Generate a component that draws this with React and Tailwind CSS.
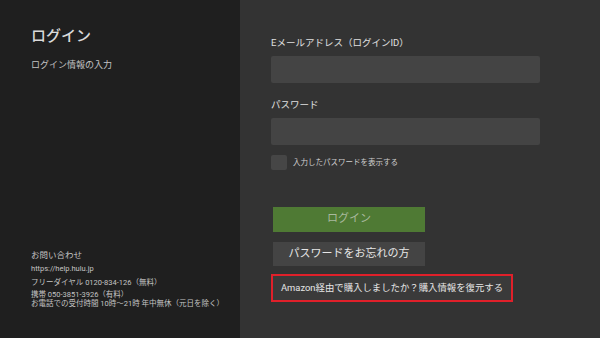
export default function App() {
  const font = { fontFamily: 'Roboto, "Noto Sans CJK JP", sans-serif' };
  return (
    <div className="flex w-[600px] h-[338px] overflow-hidden" style={font}>
      <div className="w-[240px] h-full bg-[#1f1f1f] flex flex-col justify-between pl-[31px] pt-[26px] pb-[30px]">
        <div>
          <h1 className="text-[15px] leading-[20px] text-[#dadada] font-medium">ログイン</h1>
          <p className="mt-[12px] text-[9px] leading-[14px] text-[#c4c4c4]">ログイン情報の入力</p>
        </div>
        <div className="text-[#c4c4c4]">
          <p className="text-[8.5px] leading-[12px]">お問い合わせ</p>
          <p className="mt-[2px] text-[7.5px] leading-[12px]">https://help.hulu.jp</p>
          <p className="mt-[2px] text-[7.5px] leading-[12px]">フリーダイヤル 0120-834-126（無料）</p>
          <p className="mt-[1px] text-[7.5px] leading-[9px]">携帯 050-3851-3926（有料）</p>
          <p className="text-[7.5px] leading-[9px]">お電話での受付時間 10時〜21時 年中無休（元日を除く）</p>
        </div>
      </div>
      <div className="flex-1 h-full bg-[#333333] pl-[31px] pt-[36px]">
        <label className="block text-[9.5px] leading-[14px] text-[#e0e0e0]">Eメールアドレス（ログインID）</label>
        <div className="mt-[6px] w-[269px] h-[27px] rounded-[2px] bg-[#444444]"></div>
        <label className="block mt-[15px] text-[9.5px] leading-[14px] text-[#e0e0e0]">パスワード</label>
        <div className="mt-[6px] w-[269px] h-[27px] rounded-[2px] bg-[#444444]"></div>
        <div className="mt-[10px] flex items-center gap-[6px]">
          <div className="w-[16px] h-[15px] rounded-[2px] bg-[#464646]"></div>
          <span className="text-[7.5px] leading-[12px] text-[#cfcfcf]">入力したパスワードを表示する</span>
        </div>
        <div className="ml-[2px] mt-[37px] w-[152px] h-[25px] bg-[#4f7a34] flex items-center justify-center text-[11px] text-[#a9b99e]">ログイン</div>
        <div className="ml-[2px] mt-[10px] w-[152px] h-[24px] bg-[#444444] flex items-center justify-center text-[11px] text-[#e6e6e6]">パスワードをお忘れの方</div>
        <div className="mt-[8px] w-[242px] h-[28px] border-2 border-[#e0202a] bg-[#3a3a3a] flex items-center justify-center text-[9.4px] text-[#e6e6e6]">Amazon経由で購入しましたか？購入情報を復元する</div>
      </div>
    </div>
  );
}
